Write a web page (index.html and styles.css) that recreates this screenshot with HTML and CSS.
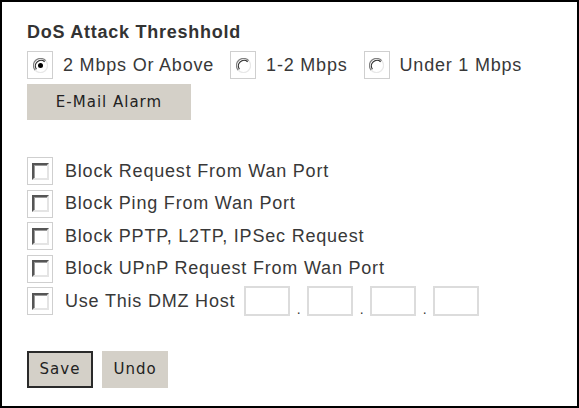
FILE: index.html
```html
<!DOCTYPE html>
<html>
<head>
<meta charset="utf-8">
<link rel="stylesheet" href="styles.css">
</head>
<body>
<div class="frame">
  <div class="title">DoS Attack Threshhold</div>
  <div class="radio-row">
    <span class="box"><svg class="radio" viewBox="0 0 12 12" width="15" height="15"><path d="M10.2 2.2 A5.5 5.5 0 0 0 1.8 9.8" fill="none" stroke="#808080" stroke-width="1"/><path d="M9.3 3 A4.5 4.5 0 0 0 2.7 9" fill="none" stroke="#303030" stroke-width="1"/><path d="M10.2 2.2 A5.5 5.5 0 0 1 1.8 9.8" fill="none" stroke="#e8e8e8" stroke-width="1"/><circle cx="6" cy="6" r="2" fill="#000"/></svg></span>
    <span class="label">2 Mbps Or Above</span>
    <span class="box"><svg class="radio" viewBox="0 0 12 12" width="15" height="15"><path d="M10.2 2.2 A5.5 5.5 0 0 0 1.8 9.8" fill="none" stroke="#808080" stroke-width="1"/><path d="M9.3 3 A4.5 4.5 0 0 0 2.7 9" fill="none" stroke="#303030" stroke-width="1"/><path d="M10.2 2.2 A5.5 5.5 0 0 1 1.8 9.8" fill="none" stroke="#e8e8e8" stroke-width="1"/></svg></span>
    <span class="label">1-2 Mbps</span>
    <span class="box"><svg class="radio" viewBox="0 0 12 12" width="15" height="15"><path d="M10.2 2.2 A5.5 5.5 0 0 0 1.8 9.8" fill="none" stroke="#808080" stroke-width="1"/><path d="M9.3 3 A4.5 4.5 0 0 0 2.7 9" fill="none" stroke="#303030" stroke-width="1"/><path d="M10.2 2.2 A5.5 5.5 0 0 1 1.8 9.8" fill="none" stroke="#e8e8e8" stroke-width="1"/></svg></span>
    <span class="label">Under 1 Mbps</span>
  </div>
  <button class="btn alarm">E-Mail Alarm</button>
  <div class="checks">
    <div class="row"><span class="box"><span class="check"></span></span><span class="text">Block Request From Wan Port</span></div>
    <div class="row"><span class="box"><span class="check"></span></span><span class="text">Block Ping From Wan Port</span></div>
    <div class="row"><span class="box"><span class="check"></span></span><span class="text">Block PPTP, L2TP, IPSec Request</span></div>
    <div class="row"><span class="box"><span class="check"></span></span><span class="text">Block UPnP Request From Wan Port</span></div>
    <div class="row"><span class="box"><span class="check"></span></span><span class="text">Use This DMZ Host</span>
      <span class="ip"><span class="field"></span><span class="dot">.</span><span class="field"></span><span class="dot">.</span><span class="field"></span><span class="dot">.</span><span class="field"></span></span>
    </div>
  </div>
  <div class="actions">
    <button class="btn save">Save</button>
    <button class="btn undo">Undo</button>
  </div>
</div>
</body>
</html>
```
FILE: styles.css
```css
html, body {
  margin: 0;
  padding: 0;
  background: #fff;
}
.frame {
  width: 579px;
  height: 408px;
  box-sizing: border-box;
  border: 2px solid #000;
  padding: 20px 0 0 25px;
  font-family: "Liberation Sans", Arial, sans-serif;
  font-size: 18px;
  color: #383838;
  letter-spacing: 0.8px;
}
.title {
  font-weight: bold;
  line-height: 20px;
  letter-spacing: 0.75px;
  color: #333;
}
.radio-row {
  display: flex;
  align-items: center;
  height: 30px;
  margin-top: 8px;
}
.box {
  width: 24px;
  height: 26px;
  border: 1px solid #cfcfcf;
  display: flex;
  align-items: center;
  justify-content: center;
  flex: none;
}
.radio-row .label {
  margin: 0 16px 0 10px;
}
.btn {
  font-family: "DejaVu Sans", sans-serif;
  font-size: 15px;
  letter-spacing: 1px;
  color: #222;
  background: #d4d0c8;
  border: none;
  padding: 0;
  margin: 0;
  display: flex;
  align-items: center;
  justify-content: center;
}
.alarm {
  width: 164px;
  height: 36px;
  margin-top: 4px;
}
.checks {
  margin-top: 35px;
  display: flex;
  flex-direction: column;
}
.row {
  display: flex;
  align-items: center;
  height: 32.5px;
}
.row .text {
  margin-left: 12px;
}
.check {
  width: 13px;
  height: 13px;
  border-top: 2px solid #555;
  border-left: 2px solid #555;
  border-right: 2px solid #e4e4e4;
  border-bottom: 2px solid #e4e4e4;
  box-shadow: inset 1px 1px 0 #9a9a9a;
  background: #fff;
}
.ip {
  display: flex;
  align-items: flex-end;
  margin-left: 9px;
}
.field {
  width: 42px;
  height: 26px;
  border: 2px solid #dcdcdc;
  display: block;
}
.dot {
  width: 17px;
  text-align: center;
  font-size: 14px;
  line-height: 14px;
  letter-spacing: 0;
}
.actions {
  display: flex;
  gap: 9px;
  margin-top: 33px;
}
.save {
  width: 66px;
  height: 37px;
  border: 2px solid #2a2a2a;
  box-sizing: border-box;
}
.undo {
  width: 66px;
  height: 37px;
}
```
